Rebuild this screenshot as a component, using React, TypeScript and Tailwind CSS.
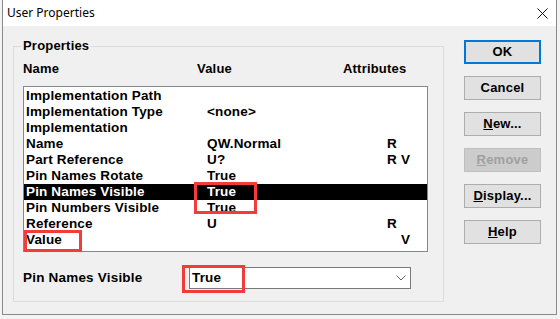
import React from 'react';

type Row = { name: string; value?: string; r?: string; v?: string; selected?: boolean };

const rows: Row[] = [
  { name: 'Implementation Path' },
  { name: 'Implementation Type', value: '<none>' },
  { name: 'Implementation' },
  { name: 'Name', value: 'QW.Normal', r: 'R' },
  { name: 'Part Reference', value: 'U?', r: 'R', v: 'V' },
  { name: 'Pin Names Rotate', value: 'True' },
  { name: 'Pin Names Visible', value: 'True', selected: true },
  { name: 'Pin Numbers Visible', value: 'True' },
  { name: 'Reference', value: 'U', r: 'R' },
  { name: 'Value', v: 'V' },
];

function DlgButton({ children, primary, disabled }: { children: React.ReactNode; primary?: boolean; disabled?: boolean }) {
  const base = 'h-[24px] w-[77px] flex items-center justify-center text-[13px] font-bold tracking-[0.2px]';
  if (primary) {
    return <button className={`${base} bg-[#e1e1e1] border-2 border-[#0078d7] text-black`}>{children}</button>;
  }
  if (disabled) {
    return <button className={`${base} bg-[#cccccc] border border-[#bfbfbf] text-[#a0a0a0]`}>{children}</button>;
  }
  return <button className={`${base} bg-[#e1e1e1] border border-[#adadad] text-black`}>{children}</button>;
}

export default function App() {
  return (
    <div className="relative w-[560px] h-[319px] bg-[#f3f3f3] overflow-hidden font-['Liberation_Sans',Arial,sans-serif] text-black">
      <div className="ml-[2px] w-[555px] h-[315px] border border-t-0 border-[#8a8a8a] bg-[#f0f0f0] flex flex-col">
        {/* title bar */}
        <div className="h-[26px] bg-white flex items-center justify-between pl-[4px] pr-[8px]">
          <span className="font-['Noto_Sans',sans-serif] text-[12px]">User Properties</span>
          <svg width="11" height="11" viewBox="0 0 11 11">
            <path d="M0.5 0.5 L10.5 10.5 M10.5 0.5 L0.5 10.5" stroke="#111" strokeWidth="1" />
          </svg>
        </div>

        <div className="flex pl-[10px]">
          <fieldset className="mt-[12px] w-[431px] border border-[#dcdcdc] pl-[9px] pr-[15px] pb-[12px]">
            <legend className="ml-[-2px] px-[2px] leading-[16px] text-[13px] font-bold tracking-[0.2px]">Properties</legend>

            <div className="mt-[7px] h-[16px] flex items-center text-[13px] font-bold tracking-[0.2px]">
              <span className="w-[174px]">Name</span>
              <span className="w-[146px]">Value</span>
              <span>Attributes</span>
            </div>

            <div className="mt-[9px] h-[166px] border border-[#828790] bg-white pt-[1px]">
              {rows.map((row) => (
                <div
                  key={row.name}
                  className={`h-[16px] flex items-center text-[13.5px] font-bold tracking-[0.15px] pl-[2px] ${row.selected ? 'bg-black text-white' : ''}`}
                >
                  <span className="w-[181px] whitespace-nowrap">{row.name}</span>
                  <span className="w-[180px] whitespace-nowrap">{row.value}</span>
                  <span className="w-[14px]">{row.r}</span>
                  <span>{row.v}</span>
                </div>
              ))}
            </div>

            <div className="mt-[15px] flex items-center">
              <span className="w-[166px] text-[13.5px] font-bold tracking-[0.2px]">Pin Names Visible</span>
              <div className="w-[222px] h-[22px] border border-[#7a7a7a] bg-white flex items-center justify-between pl-[2px] pr-[4px]">
                <span className="text-[13.5px] font-bold tracking-[0.15px]">True</span>
                <svg width="10" height="6" viewBox="0 0 10 6">
                  <polyline points="0.5,0.5 5,5 9.5,0.5" fill="none" stroke="#666" strokeWidth="1" />
                </svg>
              </div>
            </div>
          </fieldset>

          <div className="ml-[20px] pt-[14px] flex flex-col gap-[12px]">
            <DlgButton primary>OK</DlgButton>
            <DlgButton>Cancel</DlgButton>
            <DlgButton><u>N</u>ew...</DlgButton>
            <DlgButton disabled><u>R</u>emove</DlgButton>
            <DlgButton><u>D</u>isplay...</DlgButton>
            <DlgButton><u>H</u>elp</DlgButton>
          </div>
        </div>
      </div>

      {/* red annotation boxes */}
      <div className="absolute left-[194px] top-[182px] w-[63px] h-[32px] border-[3px] border-[#f23c3c]" />
      <div className="absolute left-[24px] top-[230px] w-[58px] h-[22px] border-[3px] border-[#f23c3c]" />
      <div className="absolute left-[182px] top-[265px] w-[63px] h-[28px] border-[3px] border-[#f23c3c]" />
    </div>
  );
}
